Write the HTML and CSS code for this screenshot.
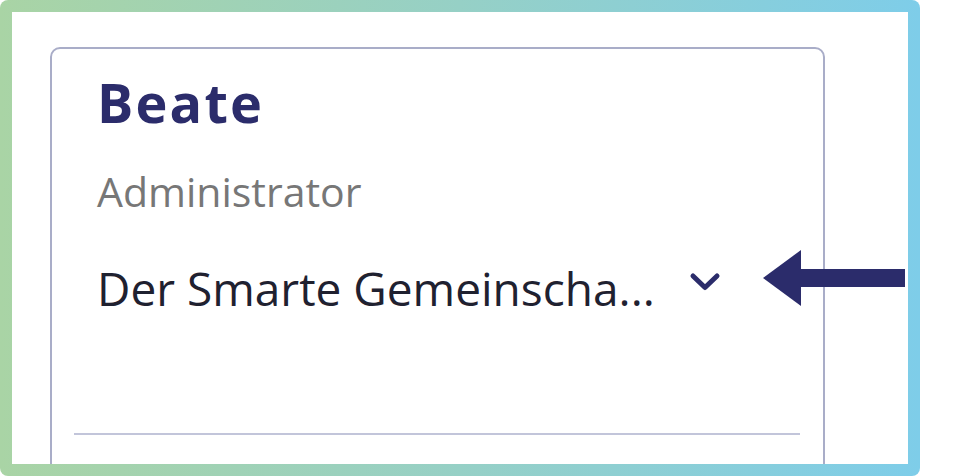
FILE: index.html
```html
<!DOCTYPE html>
<html lang="de">
<head>
<meta charset="utf-8">
<link rel="stylesheet" href="styles.css">
</head>
<body>
<div class="frame">
  <div class="inner">
    <div class="card">
      <div class="name">Beate</div>
      <div class="role">Administrator</div>
      <div class="org">
        <span class="org-name">Der Smarte Gemeinscha...</span>
        <svg class="chevron" width="32" height="20" viewBox="0 0 32 20"><polyline points="4,4 16,15.5 28,4" fill="none" stroke="#2b2c6b" stroke-width="5" stroke-linecap="round" stroke-linejoin="round"/></svg>
      </div>
      <div class="divider"></div>
    </div>
  </div>
  <svg class="arrow" width="144" height="58" viewBox="0 0 144 58"><polygon points="0,28 38,0 38,56" fill="#2b2c6b"/><rect x="36" y="19" width="106" height="18" fill="#2b2c6b"/></svg>
</div>
</body>
</html>
```
FILE: styles.css
```css
html, body {
  margin: 0;
  padding: 0;
  background: #ffffff;
}
body {
  width: 974px;
  height: 476px;
  overflow: hidden;
  font-family: "Open Sans", "Noto Sans", sans-serif;
}
.frame {
  position: relative;
  width: 920px;
  height: 476px;
  box-sizing: border-box;
  padding: 12px;
  border-radius: 8px;
  background: linear-gradient(90deg, #a9d4a5 0%, #96d0c6 50%, #7ecde9 100%);
}
.inner {
  height: 100%;
  background: #ffffff;
  box-sizing: border-box;
  padding: 35px 0 0 38px;
  overflow: hidden;
}
.card {
  width: 775px;
  height: 480px;
  box-sizing: border-box;
  border: 2px solid #a9adc8;
  border-radius: 10px;
  padding: 0 0 0 45px;
  display: flex;
  flex-direction: column;
}
.name {
  margin-top: 23px;
  font-size: 54px;
  font-weight: 700;
  line-height: 60px;
  color: #2b2c6b;
  letter-spacing: 2.2px;
}
.role {
  margin-top: 35px;
  font-size: 41px;
  line-height: 48px;
  color: #777777;
}
.org {
  margin-top: 45px;
  display: flex;
  align-items: flex-start;
  gap: 34px;
  height: 56px;
}
.org-name {
  font-size: 46px;
  line-height: 56px;
  color: #1f2130;
}
.chevron {
  display: block;
  margin-top: 12px;
}
.divider {
  margin: 117px 23px 0 -23px;
  height: 2px;
  background: #c2c5da;
}
.arrow {
  position: absolute;
  left: 763px;
  top: 250px;
}
```
